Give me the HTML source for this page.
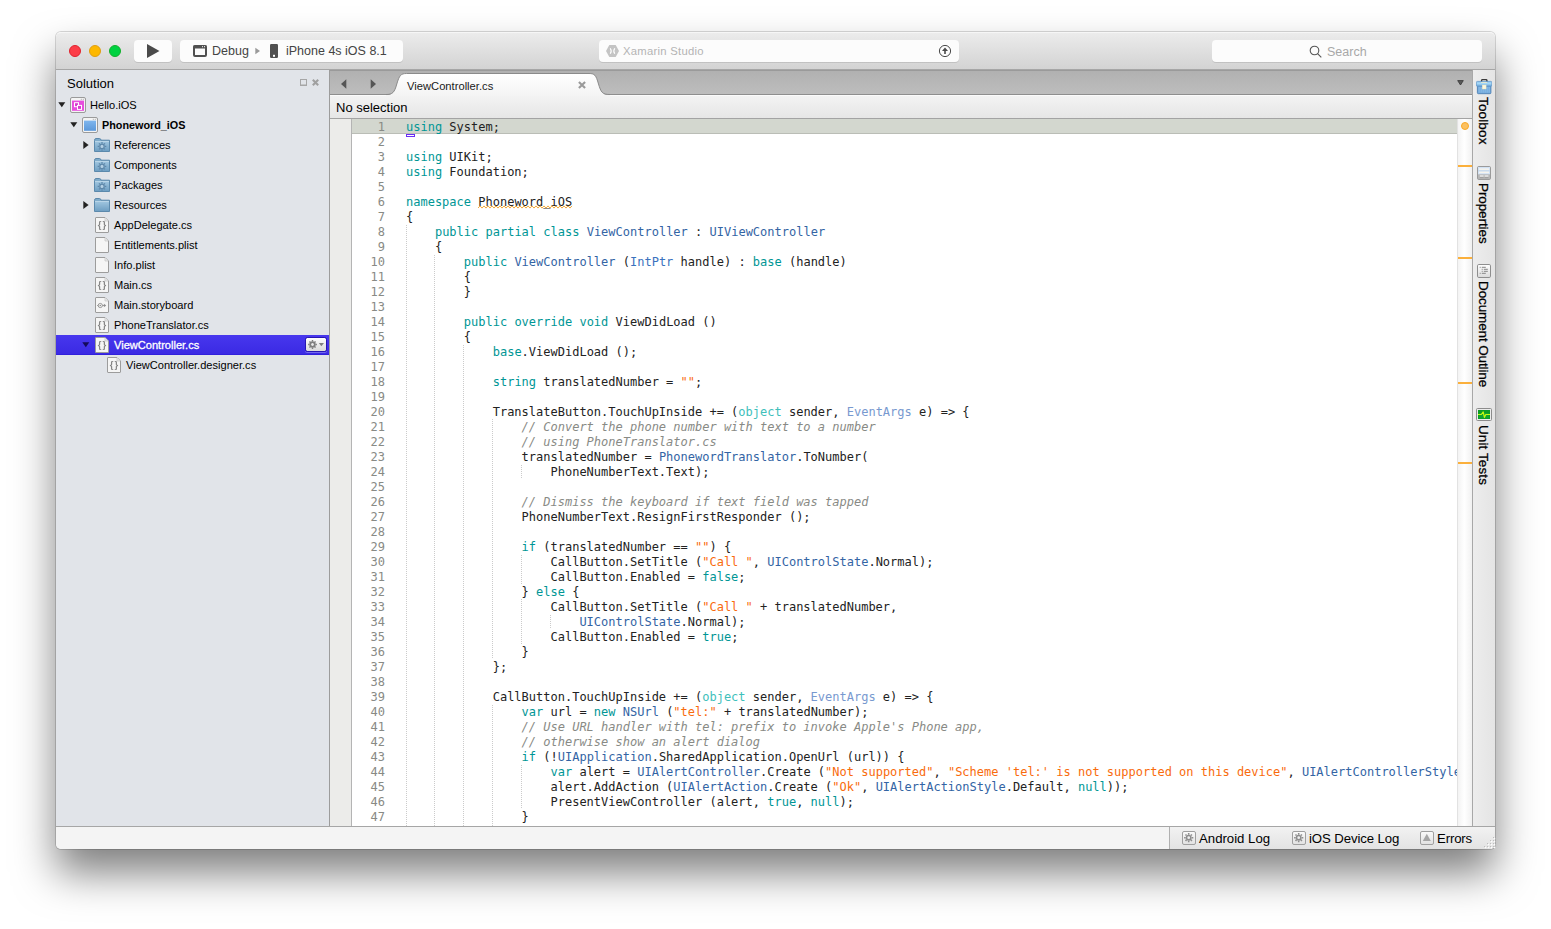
<!DOCTYPE html>
<html>
<head>
<meta charset="utf-8">
<title>Xamarin Studio</title>
<style>
html,body{margin:0;padding:0;}
body{width:1551px;height:929px;overflow:hidden;background:#fff;position:relative;
  font-family:"Liberation Sans","Helvetica Neue",Helvetica,Arial,sans-serif;color:#000;}
.abs,.abs *{box-sizing:border-box;}
.abs{position:absolute;}
/* window frame + shadow */
#frame{left:56px;top:32px;width:1439px;height:817px;border-radius:5px;background:#f4f4f4;
  box-shadow:0 0 0 1px rgba(0,0,0,0.15),0 24px 42px rgba(0,0,0,0.5);}
/* toolbar */
#toolbar{left:56px;top:32px;width:1439px;height:38px;border-radius:5px 5px 0 0;
  background:linear-gradient(#ececec 0,#e9e9e9 10%,#d3d3d3 100%);border-bottom:1px solid #a6a6a6;border-top:1px solid #f6f6f6;}
.tl{width:12px;height:12px;border-radius:6px;top:45px;}
.btn{background:#fcfcfc;border-radius:4px;top:40px;height:22px;box-shadow:0 1px 0 rgba(0,0,0,0.10);}
.tbtxt{font-size:12.5px;line-height:22px;color:#444;white-space:nowrap;top:40px;}
/* sidebar */
#sidebar{left:56px;top:70px;width:274px;height:756px;background:#e1e4e9;border-right:1px solid #9c9c9c;}
.row{left:56px;width:273px;height:20px;}
.rt{font-size:11.07px;line-height:20px;height:20px;white-space:nowrap;color:#000;}
.ic{width:16px;height:16px;}
/* editor */
#tabbar{left:330px;top:70px;width:1143px;height:25px;background:linear-gradient(#b1b1b1,#bdbdbd);border-top:1px solid #9a9a9a;border-bottom:1px solid #8e8e8e;}
#pathbar{left:330px;top:95px;width:1143px;height:24px;background:linear-gradient(#f3f3f3,#e6e6e6);border-top:1px solid #fbfbfb;border-bottom:1px solid #a3a3a3;}
#code{left:330px;top:119px;width:1143px;height:707px;background:#fff;overflow:hidden;}
#fold{left:330px;top:119px;width:22px;height:707px;background:#ececea;border-right:1px solid #b4b4b4;}
.ln{position:absolute;left:0;height:15px;line-height:15px;font-family:"DejaVu Sans Mono","Liberation Mono",monospace;font-size:12px;white-space:pre;color:#222;}
.ln b{position:absolute;top:1px;left:21px;width:34px;text-align:right;font-weight:normal;color:#888a85;}
.ln i{position:absolute;top:1px;left:76px;font-style:normal;}
.k{color:#009695}.t{color:#3364a4}.v{color:#3a72be}.o{color:#3ec0bb}.e{color:#7899cf}.s{color:#f96b0c}.c{color:#888a85;font-style:italic}
.g{position:absolute;width:1px;background:repeating-linear-gradient(to bottom,#cbcbcb 0,#cbcbcb 1px,transparent 1px,transparent 2px);}
.g2{background:repeating-linear-gradient(to bottom,transparent 0,transparent 1px,#cbcbcb 1px,#cbcbcb 2px);}
/* right dock */
#dock{left:1472px;top:70px;width:23px;height:756px;background:linear-gradient(to right,#ededed,#e4e4e4);border-left:1px solid #a8a8a8;}
.vt{-webkit-text-stroke:0.25px #000;font-size:13.5px;line-height:14px;white-space:nowrap;transform-origin:0 0;transform:rotate(90deg);color:#000;}
#ovw{left:1457px;top:119px;width:15px;height:707px;background:linear-gradient(to right,#f3f3f3 0,#ffffff 45%,#f1f1f1 100%);border-left:1px solid #e2e2e2;}
.om{left:1458px;width:14px;height:2px;background:#fbb03c;}
/* bottom bar */
#bottom{left:56px;top:826px;width:1439px;height:23px;background:#f4f4f4;border-top:1px solid #a6a6a6;border-radius:0 0 5px 5px;}
#bright{left:1169px;top:827px;width:326px;height:22px;background:linear-gradient(#f2f2f2,#e3e3e3);border-left:1px solid #b0b0b0;border-radius:0 0 5px 0;}
.bt{font-size:13.2px;line-height:22px;top:828px;white-space:nowrap;color:#000;}
.bi{width:13.5px;height:13.5px;top:831px;border:1px solid #a0a0a0;border-radius:2px;background:linear-gradient(#fafafa,#e2e2e2);}
</style>
</head>
<body>
<div class="abs" id="frame"></div>
<div class="abs" id="toolbar"></div>
<div class="abs tl" style="left:69px;background:#fc3d48;border:0.5px solid #e0222e;"></div>
<div class="abs tl" style="left:89px;background:#fdb800;border:0.5px solid #e09e10;"></div>
<div class="abs tl" style="left:109px;background:#00d241;border:0.5px solid #12b02c;"></div>
<div class="abs btn" style="left:134px;width:38px;"></div>
<svg class="abs" style="left:146px;top:43px" width="16" height="16" viewBox="0 0 16 16"><path d="M1 1 L13.5 8 L1 15 Z" fill="#4a4a4a"/></svg>
<div class="abs btn" style="left:180px;width:223px;"></div>
<svg class="abs" style="left:193px;top:45px" width="14" height="12" viewBox="0 0 14 12"><rect x="1" y="1" width="12" height="10" rx="1" fill="none" stroke="#505050" stroke-width="2"/><rect x="0.5" y="0.5" width="13" height="3" fill="#505050"/><rect x="9" y="1.2" width="1" height="1" fill="#fff"/><rect x="11" y="1.2" width="1" height="1" fill="#fff"/></svg>
<div class="abs tbtxt" style="left:212px;">Debug</div>
<svg class="abs" style="left:255px;top:47px" width="6" height="8" viewBox="0 0 6 8"><path d="M0.3 0.8 L5 4 L0.3 7.2 Z" fill="#9a9a9a"/></svg>
<svg class="abs" style="left:270px;top:44px" width="8" height="14" viewBox="0 0 8 14"><rect x="0" y="0" width="8" height="14" rx="1.2" fill="#505050"/><rect x="3" y="10.8" width="2" height="2" fill="#fff"/></svg>
<div class="abs tbtxt" style="left:286px;">iPhone 4s iOS 8.1</div>
<div class="abs btn" style="left:599px;width:360px;"></div>
<svg class="abs" style="left:606px;top:45px" width="13" height="12" viewBox="0 0 13 12"><path d="M3.3 0 H9.7 L13 6 L9.7 12 H3.3 L0 6 Z" fill="#c4c4c4"/><path d="M4.2 3.2 Q6.2 6 4.2 8.8 M8.8 3.2 Q6.8 6 8.8 8.8" fill="none" stroke="#fff" stroke-width="1.1"/></svg>
<div class="abs tbtxt" style="left:623px;top:40px;color:#b4b4b4;font-size:11.3px;letter-spacing:0.25px;">Xamarin Studio</div>
<svg class="abs" style="left:938px;top:44px" width="14" height="14" viewBox="0 0 14 14"><circle cx="7" cy="7" r="5.6" fill="none" stroke="#4a4a4a" stroke-width="1"/><path d="M7 3.6 L10 7 H7.8 V10 H6.2 V7 H4 Z" fill="#4a4a4a"/></svg>
<div class="abs btn" style="left:1212px;width:270px;"></div>
<svg class="abs" style="left:1309px;top:45px" width="13" height="13" viewBox="0 0 13 13"><circle cx="5.5" cy="5.5" r="4.3" fill="none" stroke="#555" stroke-width="1.1"/><path d="M8.6 8.6 L12.3 12.3" stroke="#555" stroke-width="1.1"/></svg>
<div class="abs tbtxt" style="left:1327px;top:41px;color:#a8a8a8;font-size:12.5px;">Search</div>

<div class="abs" id="sidebar"></div>
<div class="abs" style="left:67px;top:75px;font-size:13px;line-height:18px;color:#000;">Solution</div>
<svg class="abs" style="left:300px;top:79px" width="20" height="8" viewBox="0 0 20 8"><rect x="0.5" y="0.5" width="6" height="6" fill="none" stroke="#a6a6a6"/><rect x="0.5" y="5.5" width="6" height="1" fill="#a6a6a6"/><path d="M12.8 0.8L18.2 6.2M18.2 0.8L12.8 6.2" stroke="#a0a0a0" stroke-width="2.1"/></svg>
<svg class="abs" style="left:58px;top:102px" width="8" height="6" viewBox="0 0 8 6"><path d="M0.3 0.3H7.3L3.8 5.3Z" fill="#222"/></svg>
<svg class="abs" style="left:70px;top:97px" width="16" height="16" viewBox="0 0 16 16"><rect x="0.5" y="0.5" width="15" height="15" rx="1.5" fill="#f4f4f4" stroke="#9a9a9a"/><rect x="2" y="3.6" width="12" height="10.2" fill="#e750de"/><rect x="10.8" y="1.8" width="1" height="1" fill="#a8a8a8"/><rect x="12.8" y="1.8" width="1" height="1" fill="#a8a8a8"/><rect x="4.5" y="5.7" width="4" height="4" fill="#d63ccd" stroke="#fff"/><rect x="7.5" y="8.4" width="4" height="4" fill="#d63ccd" stroke="#fff"/></svg>
<div class="abs rt" style="left:90px;top:95px;">Hello.iOS</div>
<svg class="abs" style="left:70px;top:122px" width="8" height="6" viewBox="0 0 8 6"><path d="M0.3 0.3H7.3L3.8 5.3Z" fill="#222"/></svg>
<svg class="abs" style="left:82px;top:117px" width="16" height="16" viewBox="0 0 16 16"><rect x="0.5" y="0.5" width="15" height="15" rx="1.5" fill="#f4f4f4" stroke="#9a9a9a"/><rect x="2" y="3.6" width="12" height="10.2" fill="url(#pjg)"/><rect x="10.8" y="1.8" width="1" height="1" fill="#a8a8a8"/><rect x="12.8" y="1.8" width="1" height="1" fill="#a8a8a8"/><defs><linearGradient id="pjg" x1="0" y1="0" x2="0" y2="1"><stop offset="0" stop-color="#7fb6ee"/><stop offset="1" stop-color="#5c98da"/></linearGradient></defs></svg>
<div class="abs rt" style="left:102px;top:115px;font-weight:bold;font-size:10.8px;">Phoneword_iOS</div>
<svg class="abs" style="left:83px;top:141px" width="6" height="8" viewBox="0 0 6 8"><path d="M0.3 0V8L5.6 4Z" fill="#222"/></svg>
<svg class="abs" style="left:94px;top:138px" width="16" height="14" viewBox="0 0 16 14"><defs><linearGradient id="fg1" x1="0" y1="0" x2="0" y2="1"><stop offset="0" stop-color="#a2c7e0"/><stop offset="1" stop-color="#6f9fc3"/></linearGradient></defs><path d="M0.5 2.5 Q0.5 0.5 2 0.5 H5.5 Q6.8 0.5 7 2.2 H15.5 V13.5 H0.5 Z" fill="#7fabca" stroke="#5b89ac"/><rect x="1" y="3" width="14" height="10" fill="url(#fg1)"/><rect x="1" y="3" width="14" height="1" fill="#b9d5e8"/><g transform="translate(8,8.4)" fill="none" stroke="#5f88aa" stroke-width="1.25"><circle r="2.2" fill="#b4d0e4"/><path d="M0 -4.3V-3M0 3V4.3M-4.3 0H-3M3 0H4.3M-3 -3L-2.1 -2.1M2.1 2.1L3 3M-3 3L-2.1 2.1M2.1 -2.1L3 -3"/></g></svg>
<div class="abs rt" style="left:114px;top:135px;">References</div>
<svg class="abs" style="left:94px;top:158px" width="16" height="14" viewBox="0 0 16 14"><defs><linearGradient id="fg2" x1="0" y1="0" x2="0" y2="1"><stop offset="0" stop-color="#a2c7e0"/><stop offset="1" stop-color="#6f9fc3"/></linearGradient></defs><path d="M0.5 2.5 Q0.5 0.5 2 0.5 H5.5 Q6.8 0.5 7 2.2 H15.5 V13.5 H0.5 Z" fill="#7fabca" stroke="#5b89ac"/><rect x="1" y="3" width="14" height="10" fill="url(#fg2)"/><rect x="1" y="3" width="14" height="1" fill="#b9d5e8"/><g transform="translate(8,8.4)" fill="none" stroke="#5f88aa" stroke-width="1.25"><circle r="2.2" fill="#b4d0e4"/><path d="M0 -4.3V-3M0 3V4.3M-4.3 0H-3M3 0H4.3M-3 -3L-2.1 -2.1M2.1 2.1L3 3M-3 3L-2.1 2.1M2.1 -2.1L3 -3"/></g></svg>
<div class="abs rt" style="left:114px;top:155px;">Components</div>
<svg class="abs" style="left:94px;top:178px" width="16" height="14" viewBox="0 0 16 14"><defs><linearGradient id="fg3" x1="0" y1="0" x2="0" y2="1"><stop offset="0" stop-color="#a2c7e0"/><stop offset="1" stop-color="#6f9fc3"/></linearGradient></defs><path d="M0.5 2.5 Q0.5 0.5 2 0.5 H5.5 Q6.8 0.5 7 2.2 H15.5 V13.5 H0.5 Z" fill="#7fabca" stroke="#5b89ac"/><rect x="1" y="3" width="14" height="10" fill="url(#fg3)"/><rect x="1" y="3" width="14" height="1" fill="#b9d5e8"/><g transform="translate(8,8.4)" fill="none" stroke="#5f88aa" stroke-width="1.25"><circle r="2.2" fill="#b4d0e4"/><path d="M0 -4.3V-3M0 3V4.3M-4.3 0H-3M3 0H4.3M-3 -3L-2.1 -2.1M2.1 2.1L3 3M-3 3L-2.1 2.1M2.1 -2.1L3 -3"/></g></svg>
<div class="abs rt" style="left:114px;top:175px;">Packages</div>
<svg class="abs" style="left:83px;top:201px" width="6" height="8" viewBox="0 0 6 8"><path d="M0.3 0V8L5.6 4Z" fill="#222"/></svg>
<svg class="abs" style="left:94px;top:198px" width="16" height="14" viewBox="0 0 16 14"><defs><linearGradient id="fg4" x1="0" y1="0" x2="0" y2="1"><stop offset="0" stop-color="#a2c7e0"/><stop offset="1" stop-color="#6f9fc3"/></linearGradient></defs><path d="M0.5 2.5 Q0.5 0.5 2 0.5 H5.5 Q6.8 0.5 7 2.2 H15.5 V13.5 H0.5 Z" fill="#7fabca" stroke="#5b89ac"/><rect x="1" y="3" width="14" height="10" fill="url(#fg4)"/><rect x="1" y="3" width="14" height="1" fill="#b9d5e8"/></svg>
<div class="abs rt" style="left:114px;top:195px;">Resources</div>
<svg class="abs" style="left:95px;top:217px;filter:grayscale(1)" width="14" height="16" viewBox="0 0 14 16"><path d="M0.5 1 Q0.5 0.5 1 0.5 H10 L13.5 4 V15 Q13.5 15.5 13 15.5 H1 Q0.5 15.5 0.5 15 Z" fill="#f5f5f5" stroke="#9c9c9c"/><path d="M10 0.8 V4 H13.2" fill="#e9e9e9" stroke="#c4c4c4" stroke-width="0.7"/><text x="2.8" y="10.8" font-family="Liberation Sans, sans-serif" font-size="9.5" font-weight="bold" fill="#7a7a7a" opacity="0.9" letter-spacing="0.9">{}</text></svg>
<div class="abs rt" style="left:114px;top:215px;">AppDelegate.cs</div>
<svg class="abs" style="left:95px;top:237px;filter:grayscale(1)" width="14" height="16" viewBox="0 0 14 16"><path d="M0.5 1 Q0.5 0.5 1 0.5 H10 L13.5 4 V15 Q13.5 15.5 13 15.5 H1 Q0.5 15.5 0.5 15 Z" fill="#f5f5f5" stroke="#9c9c9c"/><path d="M10 0.8 V4 H13.2" fill="#e9e9e9" stroke="#c4c4c4" stroke-width="0.7"/></svg>
<div class="abs rt" style="left:114px;top:235px;">Entitlements.plist</div>
<svg class="abs" style="left:95px;top:257px;filter:grayscale(1)" width="14" height="16" viewBox="0 0 14 16"><path d="M0.5 1 Q0.5 0.5 1 0.5 H10 L13.5 4 V15 Q13.5 15.5 13 15.5 H1 Q0.5 15.5 0.5 15 Z" fill="#f5f5f5" stroke="#9c9c9c"/><path d="M10 0.8 V4 H13.2" fill="#e9e9e9" stroke="#c4c4c4" stroke-width="0.7"/></svg>
<div class="abs rt" style="left:114px;top:255px;">Info.plist</div>
<svg class="abs" style="left:95px;top:277px;filter:grayscale(1)" width="14" height="16" viewBox="0 0 14 16"><path d="M0.5 1 Q0.5 0.5 1 0.5 H10 L13.5 4 V15 Q13.5 15.5 13 15.5 H1 Q0.5 15.5 0.5 15 Z" fill="#f5f5f5" stroke="#9c9c9c"/><path d="M10 0.8 V4 H13.2" fill="#e9e9e9" stroke="#c4c4c4" stroke-width="0.7"/><text x="2.8" y="10.8" font-family="Liberation Sans, sans-serif" font-size="9.5" font-weight="bold" fill="#7a7a7a" opacity="0.9" letter-spacing="0.9">{}</text></svg>
<div class="abs rt" style="left:114px;top:275px;">Main.cs</div>
<svg class="abs" style="left:95px;top:297px;filter:grayscale(1)" width="14" height="16" viewBox="0 0 14 16"><path d="M0.5 1 Q0.5 0.5 1 0.5 H10 L13.5 4 V15 Q13.5 15.5 13 15.5 H1 Q0.5 15.5 0.5 15 Z" fill="#f5f5f5" stroke="#9c9c9c"/><path d="M10 0.8 V4 H13.2" fill="#e9e9e9" stroke="#c4c4c4" stroke-width="0.7"/><circle cx="5.3" cy="8.5" r="2.1" fill="#f5f5f5" stroke="#8e8e8e" stroke-width="0.9"/><circle cx="5.3" cy="8.5" r="0.8" fill="#8e8e8e"/><path d="M2.2 8.5H3.2M7.4 8.5H10" fill="none" stroke="#8e8e8e" stroke-width="0.9"/><path d="M8.9 6.7L11.2 8.5L8.9 10.3Z" fill="#8e8e8e"/></svg>
<div class="abs rt" style="left:114px;top:295px;">Main.storyboard</div>
<svg class="abs" style="left:95px;top:317px;filter:grayscale(1)" width="14" height="16" viewBox="0 0 14 16"><path d="M0.5 1 Q0.5 0.5 1 0.5 H10 L13.5 4 V15 Q13.5 15.5 13 15.5 H1 Q0.5 15.5 0.5 15 Z" fill="#f5f5f5" stroke="#9c9c9c"/><path d="M10 0.8 V4 H13.2" fill="#e9e9e9" stroke="#c4c4c4" stroke-width="0.7"/><text x="2.8" y="10.8" font-family="Liberation Sans, sans-serif" font-size="9.5" font-weight="bold" fill="#7a7a7a" opacity="0.9" letter-spacing="0.9">{}</text></svg>
<div class="abs rt" style="left:114px;top:315px;">PhoneTranslator.cs</div>
<div class="abs row" style="top:335px;background:linear-gradient(#4737ee,#3b2ae3);border-bottom:1px solid #3120dc;"></div>
<svg class="abs" style="left:82px;top:342px" width="8" height="6" viewBox="0 0 8 6"><path d="M0.3 0.3H7.3L3.8 5.3Z" fill="#140a5a"/></svg>
<svg class="abs" style="left:95px;top:337px;filter:grayscale(1)" width="14" height="16" viewBox="0 0 14 16"><path d="M0.5 1 Q0.5 0.5 1 0.5 H10 L13.5 4 V15 Q13.5 15.5 13 15.5 H1 Q0.5 15.5 0.5 15 Z" fill="#f5f5f5" stroke="#9c9c9c"/><path d="M10 0.8 V4 H13.2" fill="#e9e9e9" stroke="#c4c4c4" stroke-width="0.7"/><text x="2.8" y="10.8" font-family="Liberation Sans, sans-serif" font-size="9.5" font-weight="bold" fill="#7a7a7a" opacity="0.9" letter-spacing="0.9">{}</text></svg>
<div class="abs rt" style="left:114px;top:335px;color:#fff;-webkit-text-stroke:0.3px #fff;">ViewController.cs</div>
<svg class="abs" style="left:107px;top:357px;filter:grayscale(1)" width="14" height="16" viewBox="0 0 14 16"><path d="M0.5 1 Q0.5 0.5 1 0.5 H10 L13.5 4 V15 Q13.5 15.5 13 15.5 H1 Q0.5 15.5 0.5 15 Z" fill="#f5f5f5" stroke="#9c9c9c"/><path d="M10 0.8 V4 H13.2" fill="#e9e9e9" stroke="#c4c4c4" stroke-width="0.7"/><text x="2.8" y="10.8" font-family="Liberation Sans, sans-serif" font-size="9.5" font-weight="bold" fill="#7a7a7a" opacity="0.9" letter-spacing="0.9">{}</text></svg>
<div class="abs rt" style="left:126px;top:355px;">ViewController.designer.cs</div>
<div class="abs" style="left:305px;top:337px;width:22px;height:15px;border-radius:2.5px;background:linear-gradient(#fefefe,#dadada);border:1px solid #2615b2;box-shadow:0 1px 0 #7268ee;"></div>
<svg class="abs" style="left:305px;top:337px" width="22" height="15" viewBox="0 0 22 15"><g transform="translate(7.5,7.5)" fill="none" stroke="#808080"><circle r="2.3" stroke-width="1.8"/><path stroke-width="1.4" d="M0 -4.4V-3M0 3V4.4M-4.4 0H-3M3 0H4.4M-3.1 -3.1L-2.2 -2.2M2.2 2.2L3.1 3.1M-3.1 3.1L-2.2 2.2M2.2 -2.2L3.1 -3.1"/></g><path d="M13.8 6H19L16.4 9.2Z" fill="#808080"/></svg>

<div class="abs" id="tabbar"></div>
<svg class="abs" style="left:340px;top:79px" width="38" height="10" viewBox="0 0 38 10"><path d="M1 5L6.3 0.3V9.7Z" fill="#555"/><path d="M36 5L30.7 0.3V9.7Z" fill="#555"/></svg>
<svg class="abs" style="left:386px;top:72px;z-index:2" width="226" height="24" viewBox="0 0 226 24"><defs><linearGradient id="tabg" x1="0" y1="0" x2="0" y2="1"><stop offset="0" stop-color="#ffffff"/><stop offset="1" stop-color="#f4f4f4"/></linearGradient></defs><path d="M0 23 C6.5 23 8.5 20.5 10.8 12 C13.3 3.5 14.8 1.5 20.5 1.5 H203 C208.5 1.5 210 3 212.5 12 C215 20 216 23 224 23 V24 H0 Z" fill="url(#tabg)"/><path d="M0 22.5 C6.5 22.5 8.5 20.5 10.8 12 C13.3 3.5 14.8 1.5 20.5 1.5 H203 C208.5 1.5 210 3 212.5 12 C215 20 216 22.5 224 22.5" fill="none" stroke="#8a8a8a" stroke-width="1"/></svg>
<div class="abs" style="left:407px;top:77px;z-index:3;font-size:11.2px;line-height:18px;color:#1a1a1a;white-space:nowrap;">ViewController.cs</div>
<svg class="abs" style="left:578px;top:81px;z-index:3" width="8" height="8" viewBox="0 0 8 8"><path d="M0.9 0.9L7.1 7.1M7.1 0.9L0.9 7.1" stroke="#9a9a9a" stroke-width="2.1"/></svg>
<svg class="abs" style="left:1457px;top:80px" width="7" height="6" viewBox="0 0 7 6"><path d="M0.7 0.6H6.3L3.5 5Z" fill="#5a5a5a" stroke="#333" stroke-width="0.8"/></svg>
<div class="abs" id="pathbar"></div>
<div class="abs" style="left:336px;top:99px;font-size:13px;line-height:18px;color:#000;white-space:nowrap;">No selection</div>
<div class="abs" id="code">
<div class="abs" style="left:22px;top:0;width:1105px;height:15px;background:#d3d7cf;border-bottom:1px solid #babdb6;"></div>
<div class="g g2" style="left:76px;top:105px;height:615px"></div>
<div class="g g2" style="left:104px;top:135px;height:585px"></div>
<div class="g g2" style="left:133px;top:225px;height:495px"></div>
<div class="g" style="left:162px;top:300px;height:240px"></div>
<div class="g g2" style="left:162px;top:585px;height:135px"></div>
<div class="g g2" style="left:191px;top:345px;height:15px"></div>
<div class="g g2" style="left:191px;top:435px;height:30px"></div>
<div class="g" style="left:191px;top:480px;height:45px"></div>
<div class="g g2" style="left:191px;top:645px;height:45px"></div>
<div class="g g2" style="left:220px;top:495px;height:15px"></div>
<div class="ln" style="top:0px"><b>1</b><i><span class="k">using</span> System;</i></div>
<div class="ln" style="top:15px"><b>2</b><i></i></div>
<div class="ln" style="top:30px"><b>3</b><i><span class="k">using</span> UIKit;</i></div>
<div class="ln" style="top:45px"><b>4</b><i><span class="k">using</span> Foundation;</i></div>
<div class="ln" style="top:60px"><b>5</b><i></i></div>
<div class="ln" style="top:75px"><b>6</b><i><span class="k">namespace</span> <span class="w">Phoneword_iOS</span></i></div>
<div class="ln" style="top:90px"><b>7</b><i>{</i></div>
<div class="ln" style="top:105px"><b>8</b><i>    <span class="k">public</span> <span class="k">partial</span> <span class="k">class</span> <span class="t">ViewController</span> : <span class="t">UIViewController</span></i></div>
<div class="ln" style="top:120px"><b>9</b><i>    {</i></div>
<div class="ln" style="top:135px"><b>10</b><i>        <span class="k">public</span> <span class="t">ViewController</span> (<span class="v">IntPtr</span> handle) : <span class="k">base</span> (handle)</i></div>
<div class="ln" style="top:150px"><b>11</b><i>        {</i></div>
<div class="ln" style="top:165px"><b>12</b><i>        }</i></div>
<div class="ln" style="top:180px"><b>13</b><i></i></div>
<div class="ln" style="top:195px"><b>14</b><i>        <span class="k">public</span> <span class="k">override</span> <span class="k">void</span> ViewDidLoad ()</i></div>
<div class="ln" style="top:210px"><b>15</b><i>        {</i></div>
<div class="ln" style="top:225px"><b>16</b><i>            <span class="k">base</span>.ViewDidLoad ();</i></div>
<div class="ln" style="top:240px"><b>17</b><i></i></div>
<div class="ln" style="top:255px"><b>18</b><i>            <span class="k">string</span> translatedNumber = <span class="s">""</span>;</i></div>
<div class="ln" style="top:270px"><b>19</b><i></i></div>
<div class="ln" style="top:285px"><b>20</b><i>            TranslateButton.TouchUpInside += (<span class="o">object</span> sender, <span class="e">EventArgs</span> e) =&gt; {</i></div>
<div class="ln" style="top:300px"><b>21</b><i>                <span class="c">// Convert the phone number with text to a number</span></i></div>
<div class="ln" style="top:315px"><b>22</b><i>                <span class="c">// using PhoneTranslator.cs</span></i></div>
<div class="ln" style="top:330px"><b>23</b><i>                translatedNumber = <span class="t">PhonewordTranslator</span>.ToNumber(</i></div>
<div class="ln" style="top:345px"><b>24</b><i>                    PhoneNumberText.Text);</i></div>
<div class="ln" style="top:360px"><b>25</b><i></i></div>
<div class="ln" style="top:375px"><b>26</b><i>                <span class="c">// Dismiss the keyboard if text field was tapped</span></i></div>
<div class="ln" style="top:390px"><b>27</b><i>                PhoneNumberText.ResignFirstResponder ();</i></div>
<div class="ln" style="top:405px"><b>28</b><i></i></div>
<div class="ln" style="top:420px"><b>29</b><i>                <span class="k">if</span> (translatedNumber == <span class="s">""</span>) {</i></div>
<div class="ln" style="top:435px"><b>30</b><i>                    CallButton.SetTitle (<span class="s">"Call "</span>, <span class="t">UIControlState</span>.Normal);</i></div>
<div class="ln" style="top:450px"><b>31</b><i>                    CallButton.Enabled = <span class="k">false</span>;</i></div>
<div class="ln" style="top:465px"><b>32</b><i>                } <span class="k">else</span> {</i></div>
<div class="ln" style="top:480px"><b>33</b><i>                    CallButton.SetTitle (<span class="s">"Call "</span> + translatedNumber,</i></div>
<div class="ln" style="top:495px"><b>34</b><i>                        <span class="t">UIControlState</span>.Normal);</i></div>
<div class="ln" style="top:510px"><b>35</b><i>                    CallButton.Enabled = <span class="k">true</span>;</i></div>
<div class="ln" style="top:525px"><b>36</b><i>                }</i></div>
<div class="ln" style="top:540px"><b>37</b><i>            };</i></div>
<div class="ln" style="top:555px"><b>38</b><i></i></div>
<div class="ln" style="top:570px"><b>39</b><i>            CallButton.TouchUpInside += (<span class="o">object</span> sender, <span class="e">EventArgs</span> e) =&gt; {</i></div>
<div class="ln" style="top:585px"><b>40</b><i>                <span class="k">var</span> url = <span class="k">new</span> <span class="t">NSUrl</span> (<span class="s">"tel:"</span> + translatedNumber);</i></div>
<div class="ln" style="top:600px"><b>41</b><i>                <span class="c">// Use URL handler with tel: prefix to invoke Apple's Phone app,</span></i></div>
<div class="ln" style="top:615px"><b>42</b><i>                <span class="c">// otherwise show an alert dialog</span></i></div>
<div class="ln" style="top:630px"><b>43</b><i>                <span class="k">if</span> (!<span class="t">UIApplication</span>.SharedApplication.OpenUrl (url)) {</i></div>
<div class="ln" style="top:645px"><b>44</b><i>                    <span class="k">var</span> alert = <span class="t">UIAlertController</span>.Create (<span class="s">"Not supported"</span>, <span class="s">"Scheme 'tel:' is not supported on this device"</span>, <span class="t">UIAlertControllerStyle</span>.Alert);</i></div>
<div class="ln" style="top:660px"><b>45</b><i>                    alert.AddAction (<span class="t">UIAlertAction</span>.Create (<span class="s">"Ok"</span>, <span class="t">UIAlertActionStyle</span>.Default, <span class="k">null</span>));</i></div>
<div class="ln" style="top:675px"><b>46</b><i>                    PresentViewController (alert, <span class="k">true</span>, <span class="k">null</span>);</i></div>
<div class="ln" style="top:690px"><b>47</b><i>                }</i></div>
<div class="abs" style="left:76px;top:15px;width:9px;height:3px;border:1px solid #6a2cf5;background:#fff;"></div>
<svg class="abs" style="left:148px;top:86px" width="95" height="5" viewBox="0 0 95 5"><polyline points="0.0,3.1 2.0,0.9 4.0,3.1 6.0,0.9 8.0,3.1 10.0,0.9 12.0,3.1 14.0,0.9 16.0,3.1 18.0,0.9 20.0,3.1 22.0,0.9 24.0,3.1 26.0,0.9 28.0,3.1 30.0,0.9 32.0,3.1 34.0,0.9 36.0,3.1 38.0,0.9 40.0,3.1 42.0,0.9 44.0,3.1 46.0,0.9 48.0,3.1 50.0,0.9 52.0,3.1 54.0,0.9 56.0,3.1 58.0,0.9 60.0,3.1 62.0,0.9 64.0,3.1 66.0,0.9 68.0,3.1 70.0,0.9 72.0,3.1 74.0,0.9 76.0,3.1 78.0,0.9 80.0,3.1 82.0,0.9 84.0,3.1 86.0,0.9 88.0,3.1 90.0,0.9 92.0,3.1 94.0,0.9" fill="none" stroke="#f2a93c" stroke-width="1"/></svg>
</div>
<div class="abs" id="fold"></div>
<div class="abs" id="ovw"></div>
<div class="abs" style="left:1461px;top:122px;width:8px;height:8px;border-radius:4px;background:#fcc161;border:1px solid #f9a826;"></div>
<div class="abs om" style="top:165px"></div>
<div class="abs om" style="top:257px"></div>
<div class="abs om" style="top:382px"></div>
<div class="abs om" style="top:462px"></div>

<div class="abs" id="dock"></div>
<svg class="abs" style="left:1476px;top:79px" width="16" height="16" viewBox="0 0 16 16"><defs><linearGradient id="tbx" x1="0" y1="0" x2="0" y2="1"><stop offset="0" stop-color="#8cc4ee"/><stop offset="0.45" stop-color="#a4d8f8"/><stop offset="1" stop-color="#6aa2d4"/></linearGradient></defs><path d="M5.5 3.4V1.7Q5.5 0.6 6.6 0.6H9.9Q11 0.6 11 1.7V3.4" fill="none" stroke="#3a3a3a" stroke-width="1.3"/><rect x="1.4" y="6.5" width="13.5" height="8.2" rx="0.9" fill="#74aadc" stroke="#4c80b4" stroke-width="0.9"/><path d="M3.2 8V13.6M5.2 8V13.6M7.2 9.5V13.6M9.2 9.5V13.6M11.2 8V13.6M13.2 8V13.6" stroke="#8fc0ea" stroke-width="0.8"/><rect x="0.4" y="2.4" width="15.4" height="4.9" rx="1" fill="url(#tbx)" stroke="#5a90c6" stroke-width="0.7"/><rect x="5" y="3.1" width="6.2" height="0.8" fill="#f3ecc8"/><rect x="6.2" y="6" width="3.9" height="4" fill="#fcf8de" stroke="#e6dfb8" stroke-width="0.4"/></svg>
<div class="abs vt" style="left:1490px;top:97px;letter-spacing:0.15px;">Toolbox</div>
<svg class="abs" style="left:1477px;top:166px" width="14" height="14" viewBox="0 0 14 14"><rect x="0.5" y="0.5" width="13" height="13" rx="1.3" fill="#b6b6b6" stroke="#9a9a9a"/><rect x="1" y="1" width="12" height="7.3" fill="#d2e2f4"/><rect x="1" y="4.5" width="12" height="0.7" fill="#c2d3e6"/><rect x="2" y="2.3" width="10" height="1.6" fill="#f6f4ee"/><rect x="2" y="5.6" width="10" height="1.6" fill="#f6f4ee"/><rect x="2.8" y="9.2" width="3.8" height="1.6" fill="#e4e4e4"/><rect x="7.6" y="9.2" width="3.8" height="1.6" fill="#e4e4e4"/><rect x="2.8" y="11.5" width="3.8" height="0.6" fill="#8c8c8c"/><rect x="7.6" y="11.5" width="3.8" height="0.6" fill="#8c8c8c"/></svg>
<div class="abs vt" style="left:1490px;top:183px;letter-spacing:-0.1px;">Properties</div>
<svg class="abs" style="left:1477px;top:264px" width="14" height="14" viewBox="0 0 14 14"><defs><linearGradient id="dog" x1="0" y1="0" x2="0" y2="1"><stop offset="0" stop-color="#ffffff"/><stop offset="1" stop-color="#dadada"/></linearGradient></defs><rect x="0.5" y="0.5" width="13" height="13" rx="1.3" fill="url(#dog)" stroke="#8e8e8e"/><g fill="#858585"><rect x="2.7" y="2.8" width="1" height="1"/><rect x="4.8" y="2.8" width="4" height="1"/><rect x="4.7" y="4.8" width="1" height="1"/><rect x="6.8" y="4.8" width="4" height="1"/><rect x="4.7" y="6.8" width="1" height="1"/><rect x="6.8" y="6.8" width="4" height="1"/><rect x="2.7" y="8.8" width="1" height="1"/><rect x="4.8" y="8.8" width="4" height="1"/></g></svg>
<div class="abs vt" style="left:1490px;top:281px;letter-spacing:-0.12px;">Document Outline</div>
<svg class="abs" style="left:1476px;top:408px" width="16" height="13" viewBox="0 0 16 13"><rect x="0.5" y="0.5" width="15" height="12" rx="1" fill="#ececec" stroke="#8c8c8c"/><rect x="2" y="2" width="12" height="9" fill="#0b9c24"/><rect x="3" y="5" width="10" height="5.4" fill="#10a838" opacity="0.7"/><path d="M2 6.5H5.3L7.2 3.9L8.4 9.4L9.8 6.5H14" fill="none" stroke="#c4fb10" stroke-width="1.15" stroke-linejoin="round"/></svg>
<div class="abs vt" style="left:1490px;top:425px;letter-spacing:0.1px;">Unit Tests</div>

<div class="abs" id="bottom"></div>
<div class="abs" id="bright"></div>
<div class="abs bi" style="left:1182px;"></div>
<svg class="abs" style="left:1182px;top:831px" width="13" height="13" viewBox="0 0 13 13"><g transform="translate(6.7,6.7) scale(1.15)" fill="none" stroke="#8e8e8e" stroke-width="1.35"><circle r="1.9"/><path d="M0 -4V-2.6M0 2.6V4M-4 0H-2.6M2.6 0H4M-2.8 -2.8L-1.9 -1.9M1.9 1.9L2.8 2.8M-2.8 2.8L-1.9 1.9M1.9 -1.9L2.8 -2.8"/></g></svg>
<div class="abs bt" style="left:1199px;">Android Log</div>
<div class="abs bi" style="left:1292px;"></div>
<svg class="abs" style="left:1292px;top:831px" width="13" height="13" viewBox="0 0 13 13"><g transform="translate(6.7,6.7) scale(1.15)" fill="none" stroke="#8e8e8e" stroke-width="1.35"><circle r="1.9"/><path d="M0 -4V-2.6M0 2.6V4M-4 0H-2.6M2.6 0H4M-2.8 -2.8L-1.9 -1.9M1.9 1.9L2.8 2.8M-2.8 2.8L-1.9 1.9M1.9 -1.9L2.8 -2.8"/></g></svg>
<div class="abs bt" style="left:1309px;letter-spacing:-0.1px;">iOS Device Log</div>
<div class="abs bi" style="left:1420px;"></div>
<svg class="abs" style="left:1420px;top:831px" width="13" height="13" viewBox="0 0 13 13"><path d="M6.8 2.8L10.8 10H2.8Z" fill="#a6a6a6"/></svg>
<div class="abs bt" style="left:1437px;letter-spacing:-0.15px;">Errors</div>
<svg class="abs" style="left:1483px;top:836px" width="13" height="13" viewBox="0 0 13 13"><rect x="10" y="1" width="1" height="1" fill="#bdbdbd"/><rect x="11" y="2" width="1.2" height="1.2" fill="#fff"/><rect x="10" y="4" width="1" height="1" fill="#bdbdbd"/><rect x="11" y="5" width="1.2" height="1.2" fill="#fff"/><rect x="7" y="4" width="1" height="1" fill="#bdbdbd"/><rect x="8" y="5" width="1.2" height="1.2" fill="#fff"/><rect x="10" y="7" width="1" height="1" fill="#bdbdbd"/><rect x="11" y="8" width="1.2" height="1.2" fill="#fff"/><rect x="7" y="7" width="1" height="1" fill="#bdbdbd"/><rect x="8" y="8" width="1.2" height="1.2" fill="#fff"/><rect x="4" y="7" width="1" height="1" fill="#bdbdbd"/><rect x="5" y="8" width="1.2" height="1.2" fill="#fff"/><rect x="10" y="10" width="1" height="1" fill="#bdbdbd"/><rect x="11" y="11" width="1.2" height="1.2" fill="#fff"/><rect x="7" y="10" width="1" height="1" fill="#bdbdbd"/><rect x="8" y="11" width="1.2" height="1.2" fill="#fff"/><rect x="4" y="10" width="1" height="1" fill="#bdbdbd"/><rect x="5" y="11" width="1.2" height="1.2" fill="#fff"/><rect x="1" y="10" width="1" height="1" fill="#bdbdbd"/><rect x="2" y="11" width="1.2" height="1.2" fill="#fff"/></svg>

</body>
</html>
